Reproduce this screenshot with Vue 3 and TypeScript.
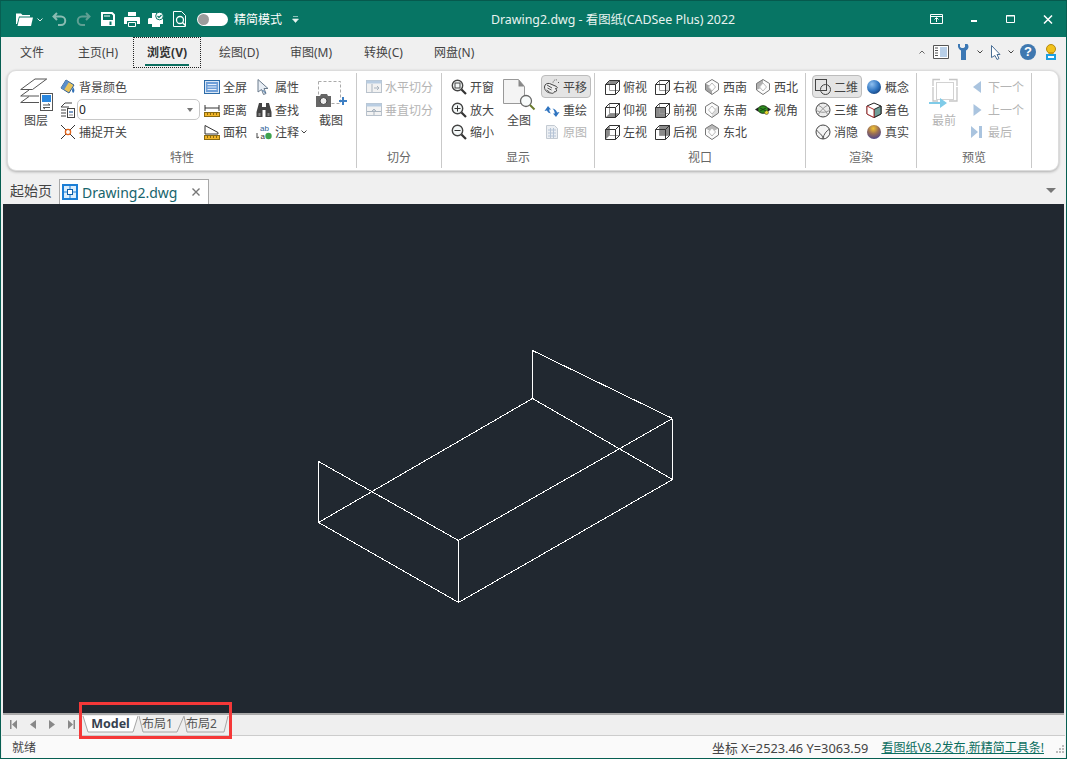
<script setup lang="ts">
interface Row {
  icon?: string
  text?: string
  off?: boolean
  on?: boolean
  combo?: boolean
  chevron?: boolean
}
interface Col {
  w: number
  ml?: number
  big?: { icon: string; text: string; off?: boolean }
  rows?: Row[]
}
interface Group {
  label: string
  w: number
  pad: number
  cols: Col[]
}

// cube helpers for the view buttons
const cube = (shade: string) => {
  const faces: Record<string, string> = {
    top: '1.5,5.5 5.5,1.5 15.5,1.5 11.5,5.5',
    bottom: '1.5,15.5 5.5,11.5 15.5,11.5 11.5,15.5',
    left: '1.5,5.5 5.5,1.5 5.5,11.5 1.5,15.5',
    right: '11.5,5.5 15.5,1.5 15.5,11.5 11.5,15.5',
    front: '1.5,5.5 11.5,5.5 11.5,15.5 1.5,15.5',
    back: '5.5,1.5 15.5,1.5 15.5,11.5 5.5,11.5'
  }
  const fill = shade === 'right' ? '#e2e2e2' : '#8a8a8a'
  return `<polygon points="${faces[shade]}" fill="${fill}"/>
    <path d="M5.5 1.5h10v10h-10z" fill="none" stroke="#999"/>
    <path d="M1.5 5.5l4-4h10v10l-4 4h-10zM1.5 5.5h10v10M11.5 5.5l4-4" fill="none" stroke="#333"/>`
}
const iso = (shade: string, fill = '#a4a4a4') => `<path d="M8 .5L14.5 4.5V11L8 15.5L1.5 11V4.5Z" fill="#fcfcfc"/><polygon points="${shade}" fill="${fill}"/>
  <path d="M8 .5L14.5 4.5V11L8 15.5L1.5 11V4.5Z" fill="none" stroke="#777"/>
  <path d="M8 4L11.5 8 8 12 4.5 8Z" fill="#fff" stroke="#bbb"/>`

const mag = (inner: string) => `<circle cx="6.5" cy="6.5" r="5.2" fill="#f4f8f8" stroke="#444" stroke-width="1.4"/>${inner}
  <path d="M10.5 10.5L15 15" stroke="#333" stroke-width="2.2"/>`

const icons: Record<string, string> = {
  bg: `<path d="M6 1l8 5-5 8L1 9z" fill="#e8c35a" stroke="#2f5f96"/><path d="M1 9l5-8 3 2-5 8z" fill="#5b8fcb"/><path d="M13 8c1 2 2 3 1 5s-2 0-2-2z" fill="#2f6fb5"/>`,
  layerset: `<path d="M1 5l4-4h7M1 5h8M1 8h5M1 11h5M1 14h5" fill="none" stroke="#444"/><rect x="7.5" y="6.5" width="7" height="9" fill="#fff" stroke="#444"/><path d="M9 9h4v2H9z" fill="#7a9cc6"/><path d="M9 13h4" stroke="#888"/>`,
  snap: `<path d="M1 1l14 14M15 1L1 15" stroke="#333"/><circle cx="8" cy="8" r="2.6" fill="#fff" stroke="#e0641c" stroke-width="1.3"/>`,
  full: `<rect x=".5" y="1.5" width="15" height="13" fill="#d9e6f5" stroke="#2d6ca8"/><rect x="2" y="3" width="12" height="10" fill="#6f9fd8"/><path d="M3.5 5.5h9M3.5 8h9M3.5 10.5h9" stroke="#e8f0fa"/>`,
  dist: `<path d="M1 3v6M15 3v6M1 6h14" fill="none" stroke="#333"/><rect x=".5" y="10.5" width="15" height="4" fill="#f0b429" stroke="#8a6a10"/><path d="M3.5 11v2M6.5 11v2M9.5 11v2M12.5 11v2" stroke="#8a6a10"/>`,
  area: `<path d="M1 1.5L14 8.5V10H1z" fill="#fff" stroke="#333"/><rect x=".5" y="11.5" width="15" height="4" fill="#f0b429" stroke="#8a6a10"/><path d="M3.5 12v2M6.5 12v2M9.5 12v2M12.5 12v2" stroke="#8a6a10"/>`,
  prop: `<path d="M2 .5L12 9.5H8L10 14.5 7.5 15.5 5.5 10.5 2 13z" fill="#e8eef5" stroke="#6b7b8c"/><path d="M6.5 11l3 3" stroke="#36689c"/>`,
  find: `<path d="M3 1h3v4h4V1h3l2.5 9v5h-6V8H6.5v7h-6v-5z" fill="#444"/><path d="M2.5 11h2v3h-2zM11.5 11h2v3h-2z" fill="#888"/>`,
  note: `<text x="4" y="7" font-size="8" font-family="Liberation Sans" fill="#2a5e96">ab</text><text x="4.5" y="15" font-size="8" font-family="Liberation Sans" fill="#333">a</text><circle cx="12.5" cy="12" r="3.2" fill="#3fa34d"/><path d="M1 9v5M1 14l2-1" stroke="#444" fill="none"/>`,
  hsplit: `<rect x=".5" y="1.5" width="15" height="12" fill="#f2f2f2" stroke="#b9c2cc"/><rect x=".5" y="1.5" width="15" height="3" fill="#b9cde2"/><path d="M6 5v8" stroke="#a9b4bf"/><path d="M8 9h5M11 7l2 2-2 2" fill="none" stroke="#a9b4bf"/>`,
  vsplit: `<rect x=".5" y="1.5" width="15" height="12" fill="#f2f2f2" stroke="#b9c2cc"/><rect x=".5" y="1.5" width="15" height="3" fill="#b9cde2"/><path d="M1 9.5h14" stroke="#a9b4bf"/><path d="M8 13V7M6 9l2-2 2 2" fill="none" stroke="#a9b4bf"/>`,
  zwin: mag(`<rect x="4" y="4" width="5" height="5" fill="none" stroke="#444"/>`),
  zin: mag(`<path d="M3.5 6.5h6M6.5 3.5v6" stroke="#333"/>`),
  zout: mag(`<path d="M3.5 6.5h6" stroke="#333"/>`),
  pan: `<path d="M.5 8c0-3 3-4 5-3.5l7 3c1.5 1 .5 2.5-1 2l1 1.5c.5 1.5-1 2-2 1.5l-.5 1c-.5 1-2 1-3 .5C4 14 .5 12 .5 8z" fill="#ececec" stroke="#444"/><path d="M3 6l5 3M3.5 9l4 2M2.5 11l3 2" stroke="#555"/><path d="M9 3.5a3 3 0 014-2.5M14.5 3v2" fill="none" stroke="#555" stroke-dasharray="1 1"/>`,
  redraw: `<path d="M.5 9L4 4l3 3.5H5.2C5.5 10 6 10.5 7 11.5 4.5 11 3.500 10 3 8.5z" fill="#2f74c0"/><path d="M15.5 10L12 15l-3-3.5h1.8C10.5 9 10 8 8.5 6.5 11 7 12.5 8.5 13 10.5z" fill="#2f74c0"/>`,
  orig: `<path d="M2.5 1.5h8l3 3v10h-11z" fill="#eceff3" stroke="#c3cad2"/><path d="M4 6h8M4 9h8M4 12h8M6.5 4v10M9.5 4v10" stroke="#b6c4d6"/>`,
  top: cube('top'),
  right: cube('right'),
  bottom: cube('bottom'),
  front: cube('front'),
  left: cube('left'),
  back: cube('back'),
  sw: iso('1.5,4.5 8,8 8,15.5 1.5,11'),
  se: iso('14.5,4.5 8,8 8,15.5 14.5,11', '#dcdcdc'),
  ne: iso('8,.5 14.5,4.5 8,8 1.5,4.5', '#b8b8b8'),
  nw: iso('8,.5 1.5,4.5 1.5,11 8,8', '#b0b0b0'),
  turtle: `<ellipse cx="8" cy="7.5" rx="5" ry="3.8" fill="#2f8f1f" stroke="#1c3a14"/><path d="M0 7.5l3-2v4zM16 7.5l-3-2v4z" fill="#222"/><circle cx="11.5" cy="10.5" r="2" fill="#e6d52c" stroke="#333" stroke-width=".5"/><path d="M5 6l6 3M11 6l-6 3" stroke="#174d12"/>`,
  d2: `<rect x=".5" y=".5" width="11" height="11" fill="none" stroke="#444"/><circle cx="10.5" cy="10.5" r="5" fill="none" stroke="#444"/>`,
  d3: `<circle cx="8" cy="8" r="7" fill="#ececec" stroke="#444"/><path d="M3 3c4 2 8 6 10 10M13 3C9 5 5 9 3 13M1 8c4 3 10 3 14 0" fill="none" stroke="#999"/>`,
  hide: `<circle cx="8" cy="8" r="7" fill="#f4f4f4" stroke="#444"/><path d="M1.5 6c3 4 6 4 6.5 9M14.5 5c-3 2-6 5-6.500 10" fill="none" stroke="#555"/>`,
  concept: `<defs><radialGradient id="bs" cx=".35" cy=".3" r=".8"><stop offset="0" stop-color="#8fc0f0"/><stop offset=".6" stop-color="#2f74c0"/><stop offset="1" stop-color="#143f78"/></radialGradient></defs><circle cx="8" cy="8" r="7" fill="url(#bs)"/>`,
  shade: `<path d="M8 1l7 3v8l-7 3.5L1 12V4z" fill="#fff" stroke="#222"/><path d="M8 7.5l7-3.5v8l-7 3.5z" fill="#6f9e98" stroke="#222"/><path d="M1 4l7 3.5V15.5L1 12z" fill="#fff" stroke="#a33"/>`,
  real: `<defs><radialGradient id="rs" cx=".45" cy=".25" r=".85"><stop offset="0" stop-color="#f4c430"/><stop offset=".45" stop-color="#9a6f55"/><stop offset="1" stop-color="#3a3a98"/></radialGradient></defs><circle cx="8" cy="8" r="7" fill="url(#rs)"/>`,
  next: `<path d="M12 2v12L4 8z" fill="#aac4df"/>`,
  prev: `<path d="M4.5 2v12l8-6z" fill="#aac4df"/>`,
  last: `<path d="M2 2v12l7-6zM10 2h3v12h-3z" fill="#aac4df"/>`,
  layers: `<g fill="none" stroke="#555"><path d="M.7 11.5L15 1h11.7L12.5 11.5zM.7 18L9 12M.7 18H19M.7 24.5L9 18.500M.7 24.5H19"/></g><rect x="20.5" y="15.5" width="12" height="17" fill="#fff" stroke="#555"/><rect x="22" y="17" width="9" height="7" fill="#2b87de"/><path d="M23 27h7M30 27l-2-1.5M23 29.5h7M23 29.5l2 1.5" fill="none" stroke="#555"/>`,
  shot: `<rect x="3.5" y="3.5" width="22" height="22" fill="none" stroke="#aaa" stroke-dasharray="3 2"/><path d="M1 18h4l1-2h6l1 2h3v11H1z" fill="#666"/><circle cx="8.5" cy="23" r="3.5" fill="#eee" stroke="#444"/><path d="M24 23h8M28 19v8" stroke="#3d7fc4" stroke-width="2"/>`,
  fit: `<path d="M.5 1.5h15l6 7v17H.5z" fill="#f4f4f4" stroke="#999"/><path d="M15.5 1.5l6 7h-6z" fill="#888"/><circle cx="23" cy="23" r="5.5" fill="#f8fbfb" stroke="#666" stroke-width="1.3"/><path d="M27 27l4.5 4.5" stroke="#6a7a2c" stroke-width="2"/>`,
  first: `<path d="M5 8V1.5h7M21 1.5h8V8M5 9v14h5M29 9v14h-8" fill="none" stroke="#c6c6c6" stroke-width="1.3"/><rect x="8.5" y="4.5" width="17" height="17" fill="none" stroke="#d2d2d2"/><path d="M1 24h11v-4l7 5-7 5v-4H1z" fill="#7fcbe8"/>`
}

const groups: Group[] = [
  {
    label: '特性', w: 349, pad: 6,
    cols: [
      { w: 44, big: { icon: 'layers', text: '图层' } },
      { w: 144, ml: 2, rows: [{ icon: 'bg', text: '背景颜色' }, { icon: 'layerset', combo: true }, { icon: 'snap', text: '捕捉开关' }] },
      { w: 52, rows: [{ icon: 'full', text: '全屏' }, { icon: 'dist', text: '距离' }, { icon: 'area', text: '面积' }] },
      { w: 58, rows: [{ icon: 'prop', text: '属性' }, { icon: 'find', text: '查找' }, { icon: 'note', text: '注释', chevron: true }] },
      { w: 34, big: { icon: 'shot', text: '截图' } }
    ]
  },
  {
    label: '切分', w: 85, pad: 9,
    cols: [{ w: 70, rows: [{ icon: 'hsplit', text: '水平切分', off: true }, { icon: 'vsplit', text: '垂直切分', off: true }] }]
  },
  {
    label: '显示', w: 153, pad: 9,
    cols: [
      { w: 48, rows: [{ icon: 'zwin', text: '开窗' }, { icon: 'zin', text: '放大' }, { icon: 'zout', text: '缩小' }] },
      { w: 40, big: { icon: 'fit', text: '全图' } },
      { w: 50, ml: 2, rows: [{ icon: 'pan', text: '平移', on: true }, { icon: 'redraw', text: '重绘' }, { icon: 'orig', text: '原图', off: true }] }
    ]
  },
  {
    label: '视口', w: 211, pad: 9,
    cols: [
      { w: 50, rows: [{ icon: 'top', text: '俯视' }, { icon: 'bottom', text: '仰视' }, { icon: 'left', text: '左视' }] },
      { w: 50, rows: [{ icon: 'right', text: '右视' }, { icon: 'front', text: '前视' }, { icon: 'back', text: '后视' }] },
      { w: 51, rows: [{ icon: 'sw', text: '西南' }, { icon: 'se', text: '东南' }, { icon: 'ne', text: '东北' }] },
      { w: 50, rows: [{ icon: 'nw', text: '西北' }, { icon: 'turtle', text: '视角' }] }
    ]
  },
  {
    label: '渲染', w: 111, pad: 6,
    cols: [
      { w: 54, rows: [{ icon: 'd2', text: '二维', on: true }, { icon: 'd3', text: '三维' }, { icon: 'hide', text: '消隐' }] },
      { w: 50, rows: [{ icon: 'concept', text: '概念' }, { icon: 'shade', text: '着色' }, { icon: 'real', text: '真实' }] }
    ]
  },
  {
    label: '预览', w: 115, pad: 7,
    cols: [
      { w: 40, big: { icon: 'first', text: '最前', off: true } },
      { w: 60, ml: 5, rows: [{ icon: 'next', text: '下一个', off: true }, { icon: 'prev', text: '上一个', off: true }, { icon: 'last', text: '最后', off: true }] }
    ]
  }
]

const menus = ['文件', '主页(H)', '浏览(V)', '绘图(D)', '审图(M)', '转换(C)', '网盘(N)']

// 图纸里的线段
const lines = [
  [318.5, 461.5, 458.5, 540.5], [318.5, 522.5, 458.5, 602.5], [318.5, 461.5, 318.5, 522.5], [458.5, 540.5, 458.5, 602.5],
  [458.5, 540.5, 672.5, 418.5], [458.5, 602.5, 672.5, 479.5], [672.5, 418.5, 672.5, 479.5], [532.5, 350.5, 672.5, 418.5],
  [532.5, 350.5, 532.5, 398.5], [532.5, 398.5, 318.5, 522.5], [532.5, 398.5, 672.5, 479.5]
]

const sheets = [
  { name: 'Model', w: 57, pr: 0, points: '1,1 6,17 51,17 56,1', active: true },
  { name: '布局1', w: 45, pr: 8, points: '0,1 4,17 38,17 45,1', active: false },
  { name: '布局2', w: 45, pr: 10, points: '0,1 3,17 40,17 44,1', active: false }
]
</script>

<template>
  <div class="win">
    <header class="title">
      <div class="quick">
        <svg width="17" height="14" viewBox="0 0 17 14"><path d="M0 3V1.5h5L6.5 3H14v1.5H3L1 12H0z" fill="#fff"/><path d="M3.5 5.5H17L15 14H1.500z" fill="#fff"/></svg>
        <svg class="q-chev" width="6" height="4" viewBox="0 0 6 4"><path d="M.5.5L3 3 5.5.5" fill="none" stroke="#dfeeea"/></svg>
        <svg class="q-undo" width="15" height="14" viewBox="0 0 15 14"><path d="M5 1L1.5 4.5 5 8M2 4.5h7a4 4 0 010 8.5H6" fill="none" stroke="#8bbcb2" stroke-width="2"/></svg>
        <svg class="q-redo" width="15" height="14" viewBox="0 0 15 14"><path d="M10 1l3.5 3.5L10 8M13 4.5H6A4 4 0 006 13h3" fill="none" stroke="#5f9f93" stroke-width="2"/></svg>
        <svg class="q-save" width="14" height="14" viewBox="0 0 14 14"><path d="M1 1h10l2 2v10H1z" fill="none" stroke="#fff" stroke-width="2"/><path d="M2 8h10v5H2z" fill="#fff"/><path d="M8.5 9.5h2V13h-2z" fill="#077564"/><path d="M3 4h6" stroke="#fff"/></svg>
        <svg class="q-print" width="16" height="15" viewBox="0 0 16 15"><path d="M4 0h8v4H4zM1 5h14a1 1 0 011 1v6h-3V9H3v3H0V6a1 1 0 011-1z" fill="#fff"/><path d="M4.5 10.5h7v4h-7z" fill="none" stroke="#fff"/></svg>
        <svg class="q-check" width="16" height="15" viewBox="0 0 16 15"><path d="M1 6h14v6h-3v3H4v-3H0V7z" fill="#fff"/><path d="M4 1h7v5H4z" fill="#fff"/><circle cx="11.5" cy="4" r="3.8" fill="#fff" stroke="#077564"/><path d="M9.5 4L11 5.5 13.5 3" fill="none" stroke="#077564" stroke-width="1.2"/></svg>
        <svg class="q-doc" width="14" height="16" viewBox="0 0 14 16"><path d="M.5.5h8l4 4v11H.5z" fill="none" stroke="#fff"/><circle cx="7" cy="9" r="3.5" fill="none" stroke="#fff" stroke-width="1.3"/><path d="M9.5 11.5l3 3" stroke="#fff" stroke-width="1.5"/></svg>
        <span class="toggle"><i></i></span>
        <span class="slim">精简模式</span>
        <svg class="q-more" width="7" height="7" viewBox="0 0 7 7"><path d="M1 .5h5M.5 3h6L3.5 6.5z" fill="#e8f3f0" stroke="#e8f3f0" stroke-width=".6"/></svg>
      </div>
      <div class="caption">Drawing2.dwg - 看图纸(CADSee Plus) 2022</div>
      <div class="winbtns">
        <svg width="13" height="10" viewBox="0 0 13 10"><path d="M.5.5h12v9H.5zM1 2.5h11M6.5 8V4M4.5 5.5l2-2 2 2" fill="none" stroke="#fff"/></svg>
        <svg class="b-min" width="6" height="2" viewBox="0 0 6 2"><path d="M0 0h6v2H0z" fill="#fff"/></svg>
        <svg class="b-max" width="9" height="8" viewBox="0 0 9 8"><path d="M.5.5h8v7h-8zM0 1h9" fill="none" stroke="#fff"/></svg>
        <svg class="b-close" width="10" height="9" viewBox="0 0 10 9"><path d="M1 .5l8 8M9 .5l-8 8" stroke="#fff" stroke-width="1.5"/></svg>
      </div>
    </header>

    <nav class="menu">
      <a v-for="m in menus" :key="m" class="menu-item" :class="{ current: m === '浏览(V)' }">
        <span>{{ m }}</span>
      </a>
      <div class="menu-right">
        <svg width="6" height="4" viewBox="0 0 6 4"><path d="M.5 3.5L3 1l2.500 2.500" fill="none" stroke="#666"/></svg>
        <svg class="m-panel" width="16" height="14" viewBox="0 0 16 14"><path d="M.5.5h15v13H.5z" fill="#fff" stroke="#555"/><path d="M7 2h7v10H7z" fill="#b8cfe8"/><path d="M2 3h3M2 5.5h3M2 8h3M2 10.5h3" stroke="#555"/></svg>
        <svg class="m-wrench" width="11" height="16" viewBox="0 0 11 16"><path d="M0 0l2 0v3l1.5 1L5.5 4 7 3V0h2.500C11 2 11 5 8 6.5V16H3V6.500C0 5-.5 2 0 0z" fill="#3c78b4"/></svg>
        <svg class="m-chev" width="6" height="4" viewBox="0 0 6 4"><path d="M.5.5L3 3 5.5.5" fill="none" stroke="#444"/></svg>
        <svg class="m-cursor" width="10" height="15" viewBox="0 0 10 15"><path d="M.5.5l8.5 9H6l2 4-2 1-2-4-3.5 2z" fill="#fff" stroke="#4a6f96"/></svg>
        <svg class="m-chev2" width="6" height="4" viewBox="0 0 6 4"><path d="M.5.5L3 3 5.5.5" fill="none" stroke="#444"/></svg>
        <span class="help">?</span>
        <svg class="m-user" width="12" height="16" viewBox="0 0 12 16"><circle cx="6" cy="5" r="4.5" fill="#f2c21b" stroke="#b58a10"/><path d="M3.5 8h5v2h-5z" fill="#d09a10"/><path d="M1 10h10v6H1z" fill="#1e9fe0"/><path d="M3 12h6v2H3z" fill="#fff"/></svg>
      </div>
    </nav>

    <section class="ribbon">
      <div v-for="g in groups" :key="g.label" class="group" :style="{ width: g.w + 'px' }">
        <div class="group-body" :style="{ paddingLeft: g.pad + 'px' }">
          <div v-for="(c, i) in g.cols" :key="i" class="col" :style="{ width: c.w + 'px', marginLeft: (c.ml || 0) + 'px' }">
            <div v-if="c.big" class="big" :class="{ off: c.big.off }">
              <svg width="32" height="32" viewBox="0 0 32 32" v-html="icons[c.big.icon]"></svg>
              <span>{{ c.big.text }}</span>
            </div>
            <template v-else>
              <div v-for="r in c.rows" :key="r.icon" class="row" :class="{ off: r.off, on: r.on }">
                <svg class="ic" width="16" height="16" viewBox="0 0 16 16" v-html="icons[r.icon as string]"></svg>
                <div v-if="r.combo" class="combo">
                  <span>0</span>
                  <svg width="6" height="4" viewBox="0 0 6 4"><path d="M0 0h6L3 4z" fill="#777"/></svg>
                </div>
                <span v-else>{{ r.text }}</span>
                <svg v-if="r.chevron" class="row-chev" width="6" height="4" viewBox="0 0 6 4"><path d="M.5.5L3 3 5.5.5" fill="none" stroke="#444"/></svg>
              </div>
            </template>
          </div>
        </div>
        <div class="group-label">{{ g.label }}</div>
      </div>
    </section>

    <div class="docbar">
      <span class="home">起始页</span>
      <div class="doctab">
        <svg width="16" height="16" viewBox="0 0 16 16"><rect width="16" height="16" fill="#1c7fd6"/><rect x="2" y="2" width="12" height="12" fill="#dceefc"/><path d="M8 0v16M0 8h16" stroke="#1c7fd6"/><rect x="5.5" y="5.5" width="5" height="5" fill="#fff" stroke="#0d5ea8"/></svg>
        <span class="docname">Drawing2.dwg</span>
        <svg class="doc-x" width="8" height="8" viewBox="0 0 8 8"><path d="M.5.5l7 7M7.5.5l-7 7" stroke="#777" stroke-width="1.4"/></svg>
      </div>
      <svg class="doc-more" width="10" height="5" viewBox="0 0 10 5"><path d="M0 0h10L5 5z" fill="#777"/></svg>
    </div>

    <main class="canvas">
      <svg class="drawing" width="1061" height="509" viewBox="3 204 1061 509">
        <line v-for="(l, i) in lines" :key="i" :x1="l[0]" :y1="l[1]" :x2="l[2]" :y2="l[3]" stroke="#fff" stroke-width="1" shape-rendering="crispEdges" />
      </svg>
    </main>

    <div class="sheetbar">
      <div class="sheetnav">
        <svg width="7" height="9" viewBox="0 0 7 9"><path d="M0 0h1.5v9H0zM7 0v9L2 4.5z" fill="#888"/></svg>
        <svg width="6" height="9" viewBox="0 0 6 9"><path d="M6 0v9L0 4.5z" fill="#888"/></svg>
        <svg width="6" height="9" viewBox="0 0 6 9"><path d="M0 0v9l6-4.5z" fill="#888"/></svg>
        <svg width="7" height="9" viewBox="0 0 7 9"><path d="M7 0H5.5v9H7zM0 0v9l5-4.5z" fill="#888"/></svg>
      </div>
      <div class="sheets">
        <div v-for="s in sheets" :key="s.name" class="sheet" :class="{ active: s.active }" :style="{ width: s.w + 'px', paddingRight: s.pr + 'px' }">
          <svg :width="s.w" height="18" :viewBox="`0 0 ${s.w} 18`">
            <polyline :points="s.points" :fill="s.active ? '#fff' : 'none'" stroke="#a6a6a6" />
          </svg>
          <span>{{ s.name }}</span>
        </div>
      </div>
    </div>

    <footer class="status">
      <span class="ready">就绪</span>
      <span class="coords">坐标 X=2523.46 Y=3063.59</span>
      <a class="news">看图纸V8.2发布,新精简工具条!</a>
      <svg class="grip" width="10" height="10" viewBox="0 0 10 10"><path d="M7 1h2v2H7zM4 4h2v2H4zM7 4h2v2H7zM1 7h2v2H1zM4 7h2v2H4zM7 7h2v2H7z" fill="#bbb"/></svg>
    </footer>

    <div class="mark"></div>
  </div>
</template>

<style scoped>
.win {
  position: relative;
  width: 1067px;
  height: 759px;
  box-sizing: border-box;
  border: 1px solid #075f52;
  border-top-color: #06594d;
  background: #f0f0f0;
  display: flex;
  flex-direction: column;
  overflow: hidden;
  font-family: "Noto Sans", "Noto Sans CJK SC", sans-serif;
  font-size: 12px;
  color: #444;
}

.title {
  height: 36px;
  flex: none;
  background: #077564;
  color: #e8f3f0;
  display: flex;
  align-items: center;
  margin: 0 -1px;
}
.quick {
  display: flex;
  align-items: center;
  padding-left: 16px;
  width: 300px;
  box-sizing: border-box;
  flex: none;
}
.q-chev { margin-left: 4px; margin-top: 2px; }
.q-undo { margin-left: 9px; }
.q-redo { margin-left: 9px; }
.q-save { margin-left: 10px; }
.q-print { margin-left: 9px; }
.q-check { margin-left: 8px; }
.q-doc { margin-left: 9px; }
.toggle {
  width: 31px;
  height: 13px;
  margin-left: 10px;
  background: #fff;
  border-radius: 7px;
  position: relative;
}
.toggle i {
  position: absolute;
  left: 1px;
  top: 1px;
  width: 11px;
  height: 11px;
  border-radius: 50%;
  background: #9c9c9c;
}
.slim {
  margin-left: 6px;
  font-size: 12px;
  color: #fff;
}
.q-more { margin-left: 10px; }
.caption {
  flex: 1;
  text-align: center;
  font-size: 12.4px;
}
.winbtns {
  width: 141px;
  flex: none;
  display: flex;
  align-items: center;
  box-sizing: border-box;
  padding-left: 4px;
}
.b-min { margin-left: 28px; margin-top: 4px; }
.b-max { margin-left: 29px; }
.b-close { margin-left: 28px; }

.menu {
  height: 33px;
  flex: none;
  display: flex;
  align-items: center;
  padding-left: 4px;
}
.menu-item {
  height: 31px;
  margin-top: -2px;
  box-sizing: border-box;
  padding: 0 15px;
  line-height: 31px;
  color: #444;
}
.menu-item:first-child { margin-right: 4px; }
.menu-item:nth-child(n+4) { margin-right: 1px; }
.menu-item:nth-child(5) { margin-right: 2px; }
.menu-item.current {
  padding: 0 13px;
  border: 1px dotted #222;
  font-weight: 700;
  color: #333;
  line-height: 29px;
  margin-right: 3px;
  position: relative;
}
.menu-item.current::after {
  content: "";
  position: absolute;
  left: 11px;
  right: 11px;
  bottom: 1px;
  height: 2px;
  background: #0b6f60;
}
.menu-right {
  margin-left: auto;
  display: flex;
  align-items: center;
  padding-right: 9px;
  height: 100%;
  margin-top: -3px;
}
.m-panel { margin-left: 8px; }
.m-wrench { margin-left: 9px; }
.m-chev { margin-left: 8px; }
.m-cursor { margin-left: 8px; }
.m-chev2 { margin-left: 7px; }
.help {
  width: 16px;
  height: 16px;
  margin-left: 6px;
  border-radius: 50%;
  background: #3f78b0;
  color: #fff;
  font: 700 13px/16px "Liberation Sans", sans-serif;
  text-align: center;
}
.m-user { margin-left: 9px; }

.ribbon {
  height: 101px;
  flex: none;
  box-sizing: border-box;
  margin: 0 7px 0 6px;
  padding-top: 2px;
  background: #fff;
  border: 1px solid #dcdcdc;
  border-radius: 9px;
  box-shadow: 0 1px 3px rgba(0, 0, 0, 0.28);
  display: flex;
}
.group {
  flex: none;
  height: 95px;
  box-sizing: border-box;
  border-right: 1px solid #c9c9c9;
  display: flex;
  flex-direction: column;
}
.group-body {
  flex: 1;
  display: flex;
  padding-top: 2px;
}
.group-label {
  height: 22px;
  line-height: 24px;
  text-align: center;
  color: #666;
}
.col {
  flex: none;
  display: flex;
  flex-direction: column;
}
.row {
  height: 23px;
  flex: none;
  display: flex;
  align-items: center;
  gap: 3px;
  box-sizing: border-box;
  white-space: nowrap;
}
.row:nth-child(3) { margin-top: -1px; }
.col:has(.on) .row,
.col:has(.on) .row.off {
  padding-left: 3px;
}
.row.on {
  width: 50px;
  background: #e4e4e4;
  border: 1px solid #bcbcbc;
  border-radius: 4px;
  padding-left: 2px !important;
}
.row.off,
.big.off {
  color: #b4b4b4;
}
.ic {
  flex: none;
  overflow: visible;
}
.row-chev { margin-left: -1px; }
.combo {
  width: 123px;
  height: 21px;
  margin-left: -2px;
  box-sizing: border-box;
  border: 1px solid #c8c8c8;
  border-radius: 5px;
  display: flex;
  align-items: center;
  justify-content: space-between;
  padding: 0 6px 0 1px;
  color: #222;
}
.big {
  display: flex;
  flex-direction: column;
  align-items: center;
  padding-top: 3px;
  color: #444;
}
.big svg { overflow: visible; }
.big span {
  margin-top: 3px;
  line-height: 16px;
}

.docbar {
  height: 33px;
  flex: none;
  display: flex;
  align-items: flex-end;
  position: relative;
  padding-left: 9px;
}
.home {
  font-size: 14px;
  line-height: 26px;
  color: #444;
}
.doctab {
  width: 150px;
  height: 25px;
  margin-left: 7px;
  box-sizing: border-box;
  background: #fff;
  border: 1px solid #a8a8a8;
  border-bottom: none;
  display: flex;
  align-items: center;
  padding-left: 2px;
}
.docname {
  margin-left: 4px;
  font-size: 14px;
  color: #17646c;
}
.doc-x { margin-left: auto; margin-right: 8px; }
.doc-more {
  position: absolute;
  right: 10px;
  top: 17px;
}

.canvas {
  flex: 1;
  margin: 0 2px;
  background: #212830;
  position: relative;
  min-height: 0;
}
.drawing {
  position: absolute;
  left: 0;
  top: 0;
}

.sheetbar {
  height: 22px;
  flex: none;
  margin: 0 2px;
  box-sizing: border-box;
  border-top: 2px solid #aaa;
  background: #efefef;
  display: flex;
  align-items: flex-start;
}
.sheetnav {
  width: 79px;
  flex: none;
  display: flex;
  gap: 13px;
  padding: 5px 0 0 7px;
  box-sizing: border-box;
}
.sheets { display: flex; }
.sheet {
  position: relative;
  height: 18px;
  flex: none;
  box-sizing: border-box;
  color: #555;
  font-size: 12px;
  line-height: 17px;
  text-align: center;
}
.sheet svg {
  position: absolute;
  left: 0;
  top: 0;
}
.sheet span { position: relative; }
.sheet.active {
  font-weight: 700;
  font-size: 12.5px;
  color: #37424f;
}

.status {
  height: 23px;
  flex: none;
  box-sizing: border-box;
  margin: 0 1px 0 1px;
  border-top: 1px solid #ccc;
  background: #fafafa;
  display: flex;
  align-items: center;
  padding-left: 10px;
}
.coords { margin-left: auto; font-size: 12.8px; }
.news {
  margin-left: 13px;
  color: #0b6e5f;
  text-decoration: underline;
}
.grip { margin: 4px 0 0 11px; flex: none; }

.mark {
  position: absolute;
  left: 78px;
  top: 701px;
  width: 153px;
  height: 37px;
  box-sizing: border-box;
  border: 3px solid #f53838;
  pointer-events: none;
}
</style>

<style>
html, body { margin: 0; padding: 0; }
</style>
